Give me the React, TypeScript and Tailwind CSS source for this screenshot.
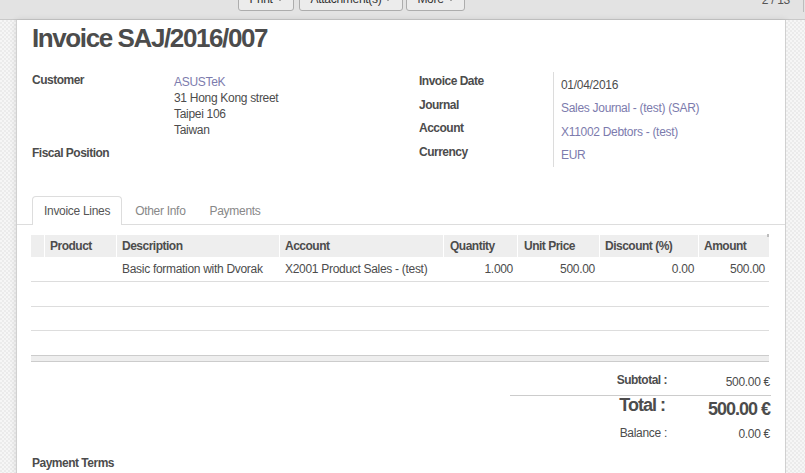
import React from "react";

const Caret = () => (
  <span className="inline-block ml-[4px] align-middle w-0 h-0 border-t-[4px] border-t-[#333] border-x-[3.5px] border-x-transparent" />
);

const cols = "grid grid-cols-[13px_72px_163px_164px_74px_82px_99px_71px]";

export default function App() {
  return (
    <div
      className="w-[805px] h-[473px] overflow-hidden bg-white text-[#4c4c4c] text-[12px] tracking-[-0.3px] flex flex-col"
      style={{ fontFamily: '"Liberation Sans", Arial, sans-serif' }}
    >
      {/* control panel strip */}
      <div className="h-[20px] shrink-0 flex bg-[#e3e3e3] border-b border-[#c9c9c9]">
        <div className="w-[238px] shrink-0" />
        <div className="flex mt-[-13px] h-[24px]">
          {[
            ["Print", "w-[56px]", "mr-[5px]"],
            ["Attachment(s)", "w-[104px]", "mr-[3px]"],
            ["More", "w-[59px]", ""],
          ].map(([t, w, m]) => (
            <div
              key={t}
              className={`${w} ${m} h-[24px] flex items-center justify-center rounded-[3px] border border-[#adadad] bg-[#ececec] text-[#333] leading-[16px]`}
            >
              {t}
              <Caret />
            </div>
          ))}
        </div>
        <div className="ml-auto flex">
          <span className="mt-[-8px] leading-[16px] text-[#555]">2 / 13</span>
          <div className="ml-[13px] mr-[1px] w-[1px] h-[12px] bg-[#bdbdbd]" />
        </div>
      </div>

      {/* main area */}
      <div className="flex flex-1 min-h-0">
        <div className="w-[16px] shrink-0 bg-[image:repeating-conic-gradient(#ebebeb_0%_25%,#f6f6f6_0%_50%)] bg-[length:4px_4px]" />
        <div className="w-[770px] shrink-0 bg-white border-x border-[#d0d0d0] shadow-[0_0_6px_rgba(0,0,0,0.12)] pl-[15px] pr-[15px] flex flex-col">
          {/* title */}
          <h1 className="pt-[3px] text-[26px] leading-[30px] font-bold tracking-[-1.4px] text-[#4c4c4c]">
            Invoice SAJ/2016/007
          </h1>

          {/* field groups */}
          <div className="flex mt-[18px]">
            <div className="w-[387px] shrink-0">
              <div className="flex">
                <div className="w-[142px] shrink-0 font-bold leading-[17px] tracking-[-0.5px] pt-[1px]">Customer</div>
                <div className="pt-[3px] leading-[16px]">
                  <div className="text-[#7c7bad]">ASUSTeK</div>
                  <div>31 Hong Kong street</div>
                  <div>Taipei 106</div>
                  <div>Taiwan</div>
                </div>
              </div>
              <div className="mt-[7px] font-bold leading-[17px] tracking-[-0.5px]">Fiscal Position</div>
            </div>
            <div className="flex">
              <div className="w-[134px] shrink-0 font-bold tracking-[-0.5px]">
                {["Invoice Date", "Journal", "Account", "Currency"].map((l) => (
                  <div key={l} className="h-[23.5px] pt-[2px] leading-[17px]">
                    {l}
                  </div>
                ))}
              </div>
              <div className="mt-[1px] pb-[1px] pl-[7px] border-l border-[#dcdcdc]">
                <div className="h-[23.5px] pt-[4.5px] leading-[17px]">01/04/2016</div>
                <div className="h-[23.5px] pt-[4.5px] leading-[17px] text-[#7c7bad]">Sales Journal - (test) (SAR)</div>
                <div className="h-[23.5px] pt-[4.5px] leading-[17px] text-[#7c7bad]">X11002 Debtors - (test)</div>
                <div className="h-[23.5px] pt-[4.5px] leading-[17px] text-[#7c7bad]">EUR</div>
              </div>
            </div>
          </div>

          {/* tabs */}
          <div className="mt-[29px] -mx-[15px] px-[15px] flex h-[29px] border-b border-[#dddddd]">
            <div className="h-[29px] px-[11px] flex items-center border border-b-0 border-[#dddddd] rounded-t-[4px] bg-white text-[#555] mr-[2px]">
              Invoice Lines
            </div>
            <div className="h-[29px] px-[11px] flex items-center text-[#888] mr-[2px]">Other Info</div>
            <div className="h-[29px] px-[11px] flex items-center text-[#888]">Payments</div>
          </div>

          {/* table */}
          <div className="mt-[10px] ml-[-1px] w-[738px]">
            <div className={`${cols} h-[22px] bg-[#eeeeee] font-bold tracking-[-0.5px] leading-[22px]`}>
              <div />
              <div className="border-l border-white pl-[5px]">Product</div>
              <div className="border-l border-white pl-[5px]">Description</div>
              <div className="border-l border-white pl-[5px]">Account</div>
              <div className="border-l border-white pl-[6px]">Quantity</div>
              <div className="border-l border-white pl-[6px]">Unit Price</div>
              <div className="border-l border-white pl-[5px]">Discount (%)</div>
              <div className="relative border-l border-white pl-[5px]">
                Amount
                <span className="absolute right-0 top-[-1px] w-[2px] h-[3px] bg-[#bdbdbd]" />
              </div>
            </div>
            <div className={`${cols} h-[24px] leading-[24px] border-b border-[#dddddd] box-content`}>
              <div />
              <div />
              <div className="pl-[6px]">Basic formation with Dvorak</div>
              <div className="pl-[6px]">X2001 Product Sales - (test)</div>
              <div className="text-right pr-[4px]">1.000</div>
              <div className="text-right pr-[4px]">500.00</div>
              <div className="text-right pr-[4px]">0.00</div>
              <div className="text-right pr-[4px]">500.00</div>
            </div>
            <div className="h-[23.5px] border-b border-[#dddddd] box-content" />
            <div className="h-[23.5px] border-b border-[#dddddd] box-content" />
            <div className="h-[23.5px]" />
            <div className="h-[5px] bg-[#eeeeee] border-y border-[#cccccc] box-content" />
          </div>

          {/* totals */}
          <div className="self-end mr-[-1px] mt-[9px] w-[261px]">
            <div className="grid grid-cols-[157px_104px] h-[25px] border-b border-[#cccccc]">
              <div className="text-right font-bold tracking-[-0.5px] leading-[17px] pt-[1.5px]">Subtotal :</div>
              <div className="text-right pr-[1px] leading-[17px] pt-[3px]">500.00 €</div>
            </div>
            <div className="grid grid-cols-[157px_104px]">
              <div className="text-right pr-[2px] font-bold text-[18px] tracking-[-1px] leading-[20px] mt-[-1px]">Total :</div>
              <div className="text-right pr-[1px] font-bold text-[18px] tracking-[-1px] leading-[20px] pt-[3px]">500.00 €</div>
            </div>
            <div className="grid grid-cols-[157px_104px] mt-[6px]">
              <div className="text-right leading-[17px]">Balance :</div>
              <div className="text-right pr-[1px] leading-[17px] pt-[1px]">0.00 €</div>
            </div>
          </div>

          <div className="mt-[12px] font-bold tracking-[-0.5px] leading-[17px]">Payment Terms</div>
        </div>
        <div className="flex-1 bg-[image:repeating-conic-gradient(#ebebeb_0%_25%,#f6f6f6_0%_50%)] bg-[length:4px_4px]" />
      </div>
    </div>
  );
}
